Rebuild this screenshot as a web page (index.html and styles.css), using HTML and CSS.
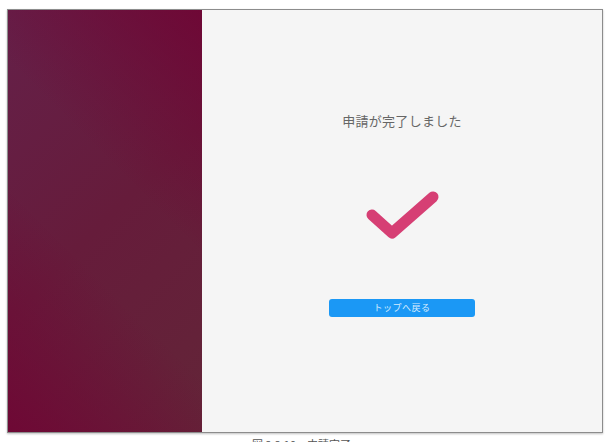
FILE: index.html
```html
<!DOCTYPE html>
<html>
<head>
    <title>申請完了</title>
    <link rel="stylesheet" href="styles.css">
</head>
<body>
    <div class="page">
        <div class="frame">
            <div class="side"></div>
            <div class="main">
                <h2 class="title">申請が完了しました</h2>
                <svg class="check" width="80" height="60" viewBox="0 0 80 60">
                    <polyline points="10,30 30,48 71,12" fill="none" stroke="#d63f74" stroke-width="11" stroke-linecap="round" stroke-linejoin="round"/>
                </svg>
                <button class="back-btn">トップへ戻る</button>
            </div>
        </div>
        <p class="caption">図 2.2.10　申請完了</p>
    </div>
</body>
</html>
```

FILE: styles.css
```css
body {
    margin: 0;
    background-color: #fff;
    font-family: "Noto Sans CJK JP", "Noto Sans", sans-serif;
}
.page {
    padding: 9px 0 0 7px;
}
.frame {
    display: flex;
    width: 594px;
    height: 422px;
    border: 1px solid #8c8c8c;
    box-shadow: 0 1px 2px rgba(0,0,0,0.25);
}
.side {
    width: 194px;
    background:
        linear-gradient(45deg, rgba(112,4,52,0.85) 0%, rgba(112,4,52,0) 40%, rgba(112,4,52,0) 60%, rgba(112,4,52,0.85) 100%),
        linear-gradient(135deg, #652049, #661c3b 50%, #632538);
}
.main {
    flex: 1;
    background-color: #f5f5f5;
    display: flex;
    flex-direction: column;
    align-items: center;
    padding-top: 103px;
}
.title {
    margin: 0;
    font-size: 13px;
    line-height: 16px;
    font-weight: normal;
    color: #666;
    letter-spacing: 0.3px;
}
.check {
    display: block;
    margin-top: 56px;
}
.back-btn {
    margin-top: 54px;
    width: 146px;
    height: 18px;
    padding: 0;
    border: none;
    border-radius: 3px;
    background-color: #1b98f5;
    color: #d6ecff;
    font-family: inherit;
    font-size: 9px;
    line-height: 18px;
    letter-spacing: 0.5px;
}
.caption {
    margin: 4px 0 0;
    text-align: center;
    font-size: 11px;
    line-height: 14px;
    color: #555;
    padding-right: 10px;
}
```
